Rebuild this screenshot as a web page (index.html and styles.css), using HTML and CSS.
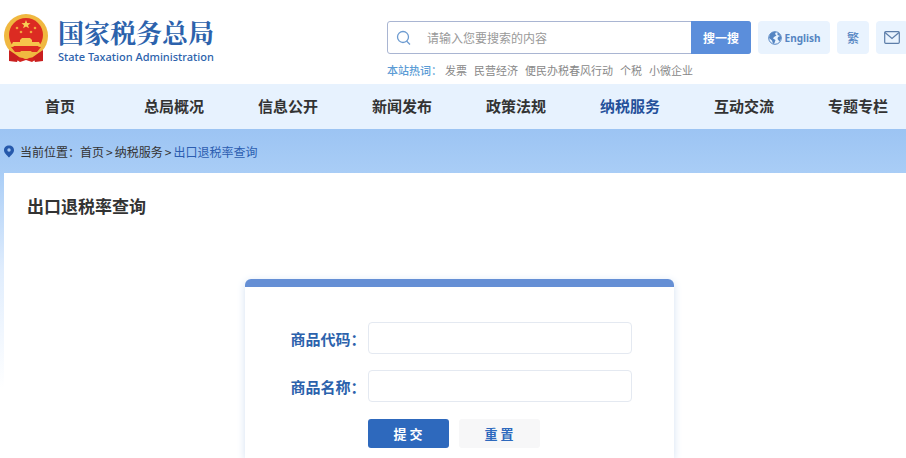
FILE: index.html
```html
<!DOCTYPE html>
<html lang="zh-CN">
<head>
  <meta charset="UTF-8">
  <meta name="viewport" content="width=device-width, initial-scale=1.0">
  <title>出口退税率查询</title>
  <link rel="stylesheet" href="styles.css">
</head>
<body>

  <header class="header">
    <a class="logo" href="#">
      <svg class="emblem" viewBox="0 0 46 50" aria-hidden="true">
        <path d="M8 34 L6 47 L14 46 L17 48 L23 46 L29 48 L32 46 L40 47 L38 34 Z" fill="#d3231f"/>
        <circle cx="23" cy="22" r="22" fill="#f0b840"/>
        <circle cx="23" cy="21" r="17" fill="#dc2b22"/>
        <path d="M23 6 l1.2 3 3.3.2 -2.5 2 .9 3.1 -2.9-1.8 -2.9 1.8 .9-3.1 -2.5-2 3.3-.2z" fill="#f8cf55"/>
        <g fill="#f3a53c">
          <circle cx="14" cy="14" r="1.3"/>
          <circle cx="32" cy="14" r="1.3"/>
          <circle cx="18" cy="18" r="1.3"/>
          <circle cx="28" cy="18" r="1.3"/>
        </g>
        <path d="M17 26 L19 24 H27 L29 26 V28 H36 L38 32 H8 L10 28 H17 Z" fill="#f6c64b"/>
        <path d="M8 33 H38 L34 38 H12 Z" fill="#dc2b22"/>
        <path d="M10 38 Q16 41 18 37 H28 Q30 41 36 38 L34 42 Q23 46 12 42 Z" fill="#f0b840"/>
        <path d="M6 36 Q12 40 16 43 L14 48 L6 47 Z M40 36 Q34 40 30 43 L32 48 L40 47 Z" fill="#c91f1f"/>
        <circle cx="23" cy="41" r="4" fill="#f0b840"/>
      </svg>
      <span class="logo-text">
        <span class="logo-cn">国家税务总局</span>
        <span class="logo-en">State Taxation Administration</span>
      </span>
    </a>

    <div class="tools">
      <div class="tools-row">
        <form class="search">
          <svg class="search-icon" viewBox="0 0 16 16" aria-hidden="true">
            <circle cx="7" cy="7" r="5.5"/>
            <path d="M10.500 11 L14 14.500"/>
          </svg>
          <input class="search-input" type="text" placeholder="请输入您要搜索的内容" aria-label="搜索">
          <button class="search-btn" type="button">搜一搜</button>
        </form>
        <a class="tool tool-en" href="#">
          <svg class="globe" viewBox="0 0 14 14" aria-hidden="true">
            <circle cx="7" cy="7" r="6.3" fill="#e9f3fe" stroke="#5585c2" stroke-width="1"/>
            <path d="M2 3 Q5 0 8 1 L7 3 L8.500 4.500 L6 6 L5 7.500 L7.500 9 L6.500 12 L5 13 L4 9.500 L1 7 Z" fill="#5585c2"/>
            <path d="M9.500 1.500 Q13 3.500 13.300 7 L11.500 10.500 L9.500 8 L10 6 L12 5 L9.500 4 Z" fill="#5585c2"/>
          </svg>
          English
        </a>
        <a class="tool tool-tc" href="#">繁</a>
        <a class="tool tool-mail" href="#" aria-label="邮箱">
          <svg class="mail" viewBox="0 0 16 13" aria-hidden="true">
            <rect x="0.700" y="0.700" width="14.600" height="11.600" rx="1"/>
            <path d="M1 1.500 L8 7.500 L15 1.500"/>
          </svg>
        </a>
      </div>
      <div class="hot">
        <span class="hot-label">本站热词：</span>
        <a href="#">发票</a>
        <a href="#">民营经济</a>
        <a href="#">便民办税春风行动</a>
        <a href="#">个税</a>
        <a href="#">小微企业</a>
      </div>
    </div>
  </header>

  <nav class="nav">
    <ul class="nav-list">
      <li><a href="#">首页</a></li>
      <li><a href="#">总局概况</a></li>
      <li><a href="#">信息公开</a></li>
      <li><a href="#">新闻发布</a></li>
      <li><a href="#">政策法规</a></li>
      <li><a class="active" href="#">纳税服务</a></li>
      <li><a href="#">互动交流</a></li>
      <li><a href="#">专题专栏</a></li>
    </ul>
  </nav>

  <main class="main">
    <div class="crumbs">
      <svg class="pin" viewBox="0 0 10 13" aria-hidden="true">
        <path d="M5 0.500 C2 0.500 0 2.500 0 5.200 C0 8 3 10 5 12.500 C7 10 10 8 10 5.200 C10 2.500 8 0.500 5 0.500 Z" fill="#2659ab"/>
        <circle cx="5" cy="5" r="1.700" fill="#a5c8f4"/>
      </svg>
      <span>当前位置：</span>
      <a href="#">首页</a>
      <span class="sep">&gt;</span>
      <a href="#">纳税服务</a>
      <span class="sep">&gt;</span>
      <a class="current" href="#">出口退税率查询</a>
    </div>

    <section class="panel">
      <h1>出口退税率查询</h1>
      <form class="query">
        <div class="field">
          <label for="code">商品代码：</label>
          <input id="code" type="text">
        </div>
        <div class="field">
          <label for="name">商品名称：</label>
          <input id="name" type="text">
        </div>
        <div class="actions">
          <button class="submit" type="button">提 交</button>
          <button class="reset" type="reset">重 置</button>
        </div>
      </form>
    </section>
  </main>

</body>
</html>
```
FILE: styles.css
```css
* {
  margin: 0;
  padding: 0;
  box-sizing: border-box;
}

body {
  min-height: 100vh;
  display: flex;
  flex-direction: column;
  font-family: "Noto Sans CJK SC", sans-serif;
  font-size: 12px;
  color: #333;
  background: #fff;
  overflow-x: hidden;
}

a {
  color: inherit;
  text-decoration: none;
}

input, button {
  font-family: inherit;
}

ul {
  list-style: none;
}

svg {
  flex: none;
}

/* header */
.header {
  height: 84px;
  display: flex;
  justify-content: space-between;
  align-items: flex-start;
  padding-left: 3px;
  overflow: hidden;
}

.logo {
  display: flex;
  gap: 9px;
  padding-top: 14px;
  color: #2c62ac;
}

.emblem {
  width: 46px;
  height: 50px;
}

.logo-text {
  display: flex;
  flex-direction: column;
}

.logo-cn {
  font-family: "Noto Serif CJK SC", "Noto Sans CJK SC", serif;
  font-size: 26px;
  line-height: 36px;
  font-weight: 700;
}

.logo-en {
  font-family: "Noto Sans", sans-serif;
  font-size: 11px;
  line-height: 14px;
  font-weight: 500;
}

.tools {
  padding-top: 21px;
}

.tools-row {
  display: flex;
  gap: 7px;
}

.search {
  display: flex;
  align-items: center;
  width: 364px;
  height: 33px;
  border: 1px solid #a9b5d2;
  border-radius: 3px;
}

.search-icon {
  width: 16px;
  height: 16px;
  margin-left: 8px;
  fill: none;
  stroke: #6d9bd0;
  stroke-width: 1.3;
}

.search-input {
  flex: 1;
  min-width: 0;
  height: 100%;
  padding-left: 15px;
  border: 0;
  outline: 0;
  background: none;
  font-size: 12px;
}

.search-input::placeholder {
  color: #999;
}

.search-btn {
  width: 60px;
  height: 33px;
  margin-right: -1px;
  border: 0;
  border-radius: 0 3px 3px 0;
  background: #5b8edb;
  color: #fff;
  font-size: 12px;
  font-weight: 700;
}

.tool {
  display: flex;
  align-items: center;
  justify-content: center;
  height: 33px;
  border-radius: 4px;
  background: #e9f3fe;
  color: #5585c2;
  font-weight: 700;
}

.tool-en {
  width: 72px;
  gap: 3px;
  font-family: "Noto Sans", sans-serif;
  font-size: 10px;
}

.tool-tc {
  width: 32px;
  font-weight: 500;
}

.tool-mail {
  width: 32px;
  margin-right: -2px;
}

.globe {
  width: 14px;
  height: 14px;
}

.mail {
  width: 16px;
  height: 13px;
  fill: none;
  stroke: #5c7da9;
  stroke-width: 1.2;
}

.hot {
  display: flex;
  gap: 7px;
  padding-top: 8px;
  font-size: 11px;
  line-height: 16px;
  color: #888;
}

.hot-label {
  margin-right: -4px;
  font-weight: 500;
  color: #5a9bd5;
}

/* nav */
.nav {
  background: #e7f2fe;
  overflow: hidden;
}

.nav-list {
  display: flex;
  margin: 0 -9px 0 3px;
}

.nav-list li {
  flex: 1;
  text-align: center;
}

.nav-list a {
  display: block;
  padding-bottom: 2px;
  font-size: 15px;
  line-height: 43px;
  font-weight: 700;
}

.nav-list .active {
  color: #24509a;
}

/* content */
.main {
  flex: 1;
  display: flex;
  flex-direction: column;
  padding-left: 4px;
  background: linear-gradient(#9cc4f3, #a9cdf6 44px, #e0edfd 140px, #fff 260px);
}

.crumbs {
  display: flex;
  align-items: center;
  height: 44px;
}

.pin {
  width: 10px;
  height: 13px;
  margin-right: 6px;
}

.sep {
  margin: 0 2px;
}

.current {
  color: #2b5db0;
}

.panel {
  flex: 1;
  padding: 20px 15px 0 23px;
  background: #fff;
}

.panel h1 {
  font-size: 17px;
  line-height: 26px;
  font-weight: 700;
}

.query {
  width: 429px;
  height: 179px;
  margin: 60px auto 0;
  padding: 35px 42px 0 46px;
  border-top: 8px solid #658fd5;
  border-radius: 6px 6px 0 0;
  box-shadow: 0 2px 8px #d3e1f2;
}

.field {
  display: flex;
  align-items: center;
  margin-bottom: 16px;
}

.field label {
  width: 77px;
  font-size: 15px;
  font-weight: 700;
  white-space: nowrap;
  color: #2c62ac;
}

.field input {
  flex: 1;
  min-width: 0;
  height: 32px;
  padding: 0 8px;
  border: 1px solid #e4e9f1;
  border-radius: 4px;
  font-size: 14px;
}

.actions {
  display: flex;
  gap: 10px;
  padding: 1px 0 0 77px;
}

.actions button {
  width: 81px;
  height: 29px;
  border: 0;
  border-radius: 3px;
  font-size: 13px;
  font-weight: 700;
}

.submit {
  background: #2e69bd;
  color: #fff;
}

.reset {
  background: #f7f7f8;
  color: #2e69bd;
}
```
